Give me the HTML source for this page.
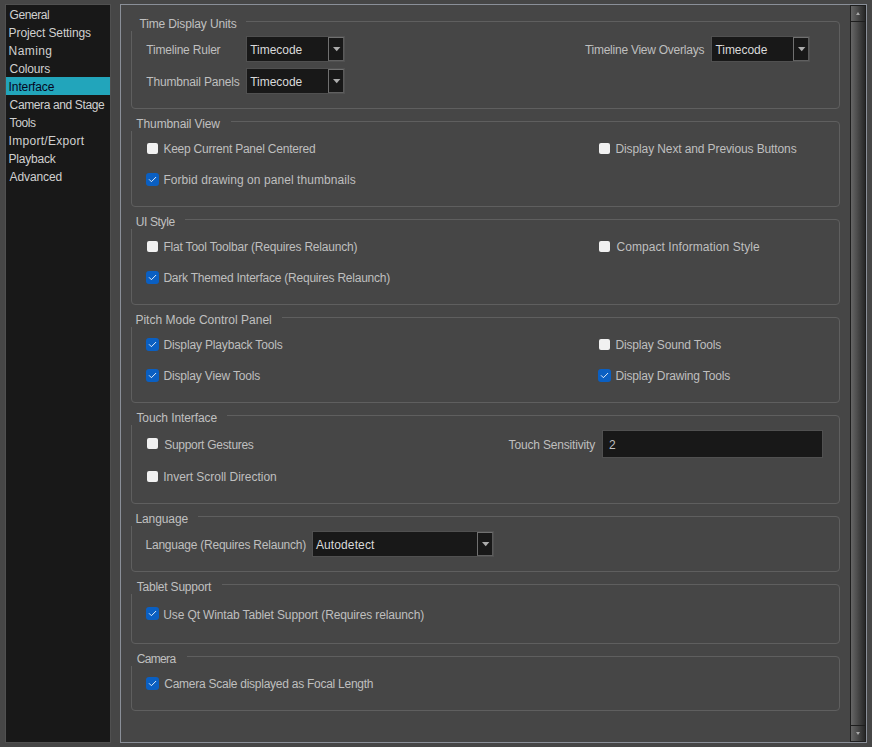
<!DOCTYPE html>
<html><head><meta charset="utf-8"><style>
*{box-sizing:border-box;margin:0;padding:0}
html,body{width:872px;height:747px;overflow:hidden;background:#464646}
body{position:relative;font-family:"Liberation Sans",sans-serif;font-size:12px;line-height:14px}
.a{position:absolute}
.t{position:absolute;white-space:pre;line-height:14px;font-size:12px}
.side{color:#d0d0d0}
.sel{color:#06061e}
.title{color:#c0c0c0}
.label{color:#bfbfbf}
.combo{color:#dadada}
.grp{position:absolute;left:131px;width:709px;border:1px solid #5f5f5f;border-radius:4px}
.mask{position:absolute;left:129px;background:#464646}
.cb0{position:absolute;width:11px;height:11px;background:#f1f1f1;border-radius:2px}
.cb1{position:absolute;width:13px;height:13px;background:#0a5fc2;border-radius:3px}
.cb1 svg{position:absolute;left:0;top:0}
.fld{position:absolute;background:#181818;border:1px solid #505050}
.btn{position:absolute;width:16px;height:24px;background:#181818;border:1px solid;border-color:#707070 #5a5a5a #606060 #707070}
.arr{position:absolute;width:8px;height:5px}
.sbtn{position:absolute;left:851px;width:14px;background:linear-gradient(to right,#666666,#4b4b4b 45%,#272727)}
</style></head><body>

<div class="a" style="left:5px;top:4px;width:106px;height:739px;background:#181818;border:1px solid #505050"></div>
<div class="a" style="left:6px;top:77px;width:104px;height:18px;background:#22a5bb"></div>
<div class="a" style="left:120px;top:4px;width:747px;height:739px;background:#464646;border:1px solid #8a8f98"></div>
<div class="a" style="left:850px;top:5px;width:16px;height:737px;background:#1e1e1e"></div>
<div class="sbtn" style="top:6px;height:15px"></div>
<div class="sbtn" style="top:22px;height:703px"></div>
<div class="sbtn" style="top:726px;height:15px"></div>
<div class="a" style="left:856px;top:11.5px;width:0;height:0;border-left:2.5px solid transparent;border-right:2.5px solid transparent;border-bottom:3px solid #a8a8a8"></div>
<div class="a" style="left:856px;top:732px;width:0;height:0;border-left:2.5px solid transparent;border-right:2.5px solid transparent;border-top:3px solid #a8a8a8"></div>
<div class="grp" style="top:21px;height:88px"></div>
<div class="mask" style="top:20px;width:117px;height:11px"></div>
<div class="grp" style="top:121px;height:86px"></div>
<div class="mask" style="top:120px;width:102px;height:11px"></div>
<div class="grp" style="top:219px;height:86px"></div>
<div class="mask" style="top:218px;width:56px;height:11px"></div>
<div class="grp" style="top:317px;height:86px"></div>
<div class="mask" style="top:316px;width:153px;height:11px"></div>
<div class="grp" style="top:415px;height:89px"></div>
<div class="mask" style="top:414px;width:98px;height:11px"></div>
<div class="grp" style="top:516px;height:56px"></div>
<div class="mask" style="top:515px;width:69px;height:11px"></div>
<div class="grp" style="top:584px;height:60px"></div>
<div class="mask" style="top:583px;width:93px;height:11px"></div>
<div class="grp" style="top:656px;height:55px"></div>
<div class="mask" style="top:655px;width:58px;height:11px"></div>
<div class="fld" style="left:246px;top:36px;width:99px;height:26px"></div>
<div class="btn" style="left:328px;top:37px"></div>
<svg class="arr" style="left:333px;top:47px" viewBox="0 0 8 5"><polygon points="0,0 7.4,0 3.7,4.2" fill="#acacac"/></svg>
<div class="fld" style="left:246px;top:68px;width:99px;height:26px"></div>
<div class="btn" style="left:328px;top:69px"></div>
<svg class="arr" style="left:333px;top:79px" viewBox="0 0 8 5"><polygon points="0,0 7.4,0 3.7,4.2" fill="#acacac"/></svg>
<div class="fld" style="left:711px;top:36px;width:99px;height:26px"></div>
<div class="btn" style="left:793px;top:37px"></div>
<svg class="arr" style="left:798px;top:47px" viewBox="0 0 8 5"><polygon points="0,0 7.4,0 3.7,4.2" fill="#acacac"/></svg>
<div class="fld" style="left:312px;top:531px;width:182px;height:26px"></div>
<div class="btn" style="left:477px;top:532px"></div>
<svg class="arr" style="left:482px;top:542px" viewBox="0 0 8 5"><polygon points="0,0 7.4,0 3.7,4.2" fill="#acacac"/></svg>
<div class="fld" style="left:602px;top:430px;width:221px;height:28px"></div>
<div class="cb0" style="left:147px;top:143px"></div>
<div class="cb0" style="left:599px;top:143px"></div>
<div class="cb1" style="left:146px;top:173px"><svg width="13" height="13" viewBox="0 0 13 13"><path d="M3.3 6.6 L5.4 8.7 L9.8 4.3" fill="none" stroke="#fff" stroke-width="0.95" stroke-opacity="0.92" stroke-linecap="round" stroke-linejoin="round"/></svg></div>
<div class="cb0" style="left:147px;top:241px"></div>
<div class="cb0" style="left:599px;top:241px"></div>
<div class="cb1" style="left:146px;top:271px"><svg width="13" height="13" viewBox="0 0 13 13"><path d="M3.3 6.6 L5.4 8.7 L9.8 4.3" fill="none" stroke="#fff" stroke-width="0.95" stroke-opacity="0.92" stroke-linecap="round" stroke-linejoin="round"/></svg></div>
<div class="cb1" style="left:146px;top:338px"><svg width="13" height="13" viewBox="0 0 13 13"><path d="M3.3 6.6 L5.4 8.7 L9.8 4.3" fill="none" stroke="#fff" stroke-width="0.95" stroke-opacity="0.92" stroke-linecap="round" stroke-linejoin="round"/></svg></div>
<div class="cb0" style="left:599px;top:339px"></div>
<div class="cb1" style="left:146px;top:369px"><svg width="13" height="13" viewBox="0 0 13 13"><path d="M3.3 6.6 L5.4 8.7 L9.8 4.3" fill="none" stroke="#fff" stroke-width="0.95" stroke-opacity="0.92" stroke-linecap="round" stroke-linejoin="round"/></svg></div>
<div class="cb1" style="left:598px;top:369px"><svg width="13" height="13" viewBox="0 0 13 13"><path d="M3.3 6.6 L5.4 8.7 L9.8 4.3" fill="none" stroke="#fff" stroke-width="0.95" stroke-opacity="0.92" stroke-linecap="round" stroke-linejoin="round"/></svg></div>
<div class="cb0" style="left:147px;top:438px"></div>
<div class="cb0" style="left:147px;top:471px"></div>
<div class="cb1" style="left:146px;top:607px"><svg width="13" height="13" viewBox="0 0 13 13"><path d="M3.3 6.6 L5.4 8.7 L9.8 4.3" fill="none" stroke="#fff" stroke-width="0.95" stroke-opacity="0.92" stroke-linecap="round" stroke-linejoin="round"/></svg></div>
<div class="cb1" style="left:146px;top:677px"><svg width="13" height="13" viewBox="0 0 13 13"><path d="M3.3 6.6 L5.4 8.7 L9.8 4.3" fill="none" stroke="#fff" stroke-width="0.95" stroke-opacity="0.92" stroke-linecap="round" stroke-linejoin="round"/></svg></div>
<div class="t side" style="left:9.6px;top:8px;letter-spacing:-0.433px">General</div>
<div class="t side" style="left:8.6px;top:26px;letter-spacing:-0.107px">Project Settings</div>
<div class="t side" style="left:8.6px;top:44px;letter-spacing:0.420px">Naming</div>
<div class="t side" style="left:9.6px;top:62px;letter-spacing:-0.133px">Colours</div>
<div class="t sel" style="left:8.6px;top:80px;letter-spacing:-0.112px">Interface</div>
<div class="t side" style="left:9.6px;top:98px;letter-spacing:-0.373px">Camera and Stage</div>
<div class="t side" style="left:9.6px;top:116px;letter-spacing:-0.425px">Tools</div>
<div class="t side" style="left:8.6px;top:134px;letter-spacing:0.283px">Import/Export</div>
<div class="t side" style="left:8.6px;top:152px;letter-spacing:-0.229px">Playback</div>
<div class="t side" style="left:9.6px;top:170px;letter-spacing:-0.114px">Advanced</div>
<div class="t title" style="left:139.4px;top:17px;letter-spacing:-0.129px">Time Display Units</div>
<div class="t title" style="left:136.3px;top:117px;letter-spacing:-0.115px">Thumbnail View</div>
<div class="t title" style="left:135.7px;top:215px;letter-spacing:-0.357px">UI Style</div>
<div class="t title" style="left:135.4px;top:313px;letter-spacing:0.013px">Pitch Mode Control Panel</div>
<div class="t title" style="left:136.4px;top:411px;letter-spacing:-0.093px">Touch Interface</div>
<div class="t title" style="left:135.4px;top:512px;letter-spacing:-0.086px">Language</div>
<div class="t title" style="left:136.7px;top:580px;letter-spacing:-0.208px">Tablet Support</div>
<div class="t title" style="left:136.7px;top:652px;letter-spacing:-0.660px">Camera</div>
<div class="t label" style="left:146.3px;top:43px;letter-spacing:-0.200px">Timeline Ruler</div>
<div class="t label" style="left:146.3px;top:75px;letter-spacing:-0.173px">Thumbnail Panels</div>
<div class="t label" style="left:584.9px;top:43px;letter-spacing:-0.248px">Timeline View Overlays</div>
<div class="t combo" style="left:250.2px;top:43px;letter-spacing:-0.029px">Timecode</div>
<div class="t combo" style="left:250.2px;top:75px;letter-spacing:-0.029px">Timecode</div>
<div class="t combo" style="left:715.4px;top:43px;letter-spacing:-0.029px">Timecode</div>
<div class="t label" style="left:163.4px;top:142px;letter-spacing:-0.227px">Keep Current Panel Centered</div>
<div class="t label" style="left:615.5px;top:142px;letter-spacing:-0.113px">Display Next and Previous Buttons</div>
<div class="t label" style="left:163.4px;top:173px;letter-spacing:0.067px">Forbid drawing on panel thumbnails</div>
<div class="t label" style="left:163.4px;top:240px;letter-spacing:-0.189px">Flat Tool Toolbar (Requires Relaunch)</div>
<div class="t label" style="left:616.4px;top:240px;letter-spacing:0.079px">Compact Information Style</div>
<div class="t label" style="left:163.4px;top:271px;letter-spacing:-0.225px">Dark Themed Interface (Requires Relaunch)</div>
<div class="t label" style="left:163.5px;top:338px;letter-spacing:-0.157px">Display Playback Tools</div>
<div class="t label" style="left:615.4px;top:338px;letter-spacing:-0.150px">Display Sound Tools</div>
<div class="t label" style="left:163.5px;top:369px;letter-spacing:-0.165px">Display View Tools</div>
<div class="t label" style="left:615.4px;top:369px;letter-spacing:-0.150px">Display Drawing Tools</div>
<div class="t label" style="left:164.2px;top:438px;letter-spacing:-0.293px">Support Gestures</div>
<div class="t label" style="left:508.6px;top:438px;letter-spacing:-0.175px">Touch Sensitivity</div>
<div class="t label" style="left:608.9px;top:438px;letter-spacing:0.000px">2</div>
<div class="t label" style="left:163.2px;top:470px;letter-spacing:-0.023px">Invert Scroll Direction</div>
<div class="t label" style="left:145.5px;top:538px;letter-spacing:-0.222px">Language (Requires Relaunch)</div>
<div class="t combo" style="left:315.9px;top:538px;letter-spacing:0.122px">Autodetect</div>
<div class="t label" style="left:163.3px;top:608px;letter-spacing:-0.134px">Use Qt Wintab Tablet Support (Requires relaunch)</div>
<div class="t label" style="left:164.3px;top:677px;letter-spacing:-0.259px">Camera Scale displayed as Focal Length</div>
</body></html>
